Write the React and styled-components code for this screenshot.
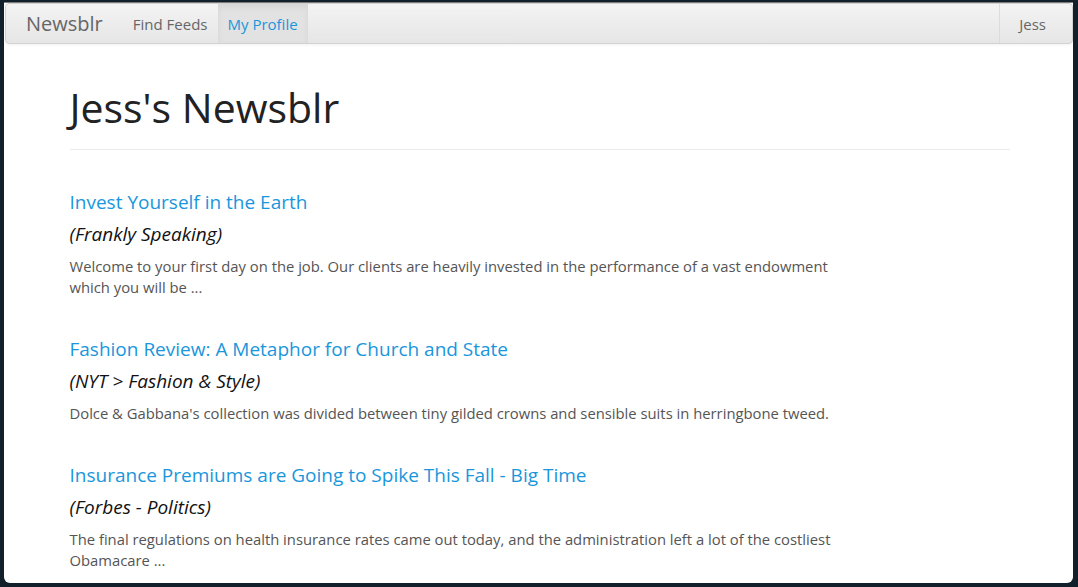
import React from 'react'
import styled, { createGlobalStyle } from 'styled-components'

const LinkColor = "#1a96dc";
const TextColor = "#555";

const GlobalStyle = createGlobalStyle`
  html, body {
    margin: 0;
    padding: 0;
    height: 100%;
    background: #12202b;
  }
  body {
    font-family: 'Open Sans', 'Liberation Sans', sans-serif;
  }
  #root {
    height: 100%;
  }
`

const Desktop = styled.div`
  height: 587px;
  padding: 2px 5px 4px 4px;
  box-sizing: border-box;
  overflow: hidden;
`
const Window = styled.div`
  height: 100%;
  background: #fff;
  border-top: 1px solid #7a7a7a;
  border-radius: 0 0 6px 6px;
  overflow: hidden;
  box-sizing: border-box;
`
const Navbar = styled.nav`
  display: flex;
  align-items: stretch;
  height: 41px;
  margin: 0 0 0 1px;
  background: linear-gradient(#f3f3f3, #e6e6e6);
  border: 1px solid #d2d2d2;
  border-radius: 4px;
  box-shadow: 0 1px 3px rgba(0, 0, 0, 0.06);
  box-sizing: border-box;
`
const Brand = styled.a`
  display: flex;
  align-items: center;
  padding: 0 20px 0 20px;
  font-size: 20px;
  color: #666;
  text-decoration: none;
`
const NavItem = styled.a`
  display: flex;
  align-items: center;
  padding: 0 10px;
  font-size: 15px;
  color: ${p => p.active ? LinkColor : "#666"};
  background: ${p => p.active ? "#e2e2e2" : "transparent"};
  box-shadow: ${p => p.active ? "inset 0 3px 6px rgba(0,0,0,0.06)" : "none"};
  text-decoration: none;
`
const Spacer = styled.div`
  flex: 1;
`
const UserItem = styled(NavItem)`
  padding: 0 26px 0 19px;
  border-left: 1px solid #dcdcdc;
`
const Container = styled.main`
  width: 940px;
  margin: 0 auto;
  padding-left: 2px;
`
const Header = styled.div`
  padding: 38px 0 17px;
  border-bottom: 1px solid #eaeaea;
`
const Title = styled.h1`
  margin: 0;
  font-size: 41px;
  font-weight: 400;
  line-height: 50px;
  color: #222;
`
const List = styled.div`
  padding-top: 39px;
`
const Article = styled.article`
  margin-bottom: 38px;
`
const ArticleTitle = styled.a`
  display: block;
  font-size: 19px;
  line-height: 26px;
  color: ${LinkColor};
  text-decoration: none;
`
const Source = styled.h4`
  margin: 6px 0 9px;
  font-size: 19px;
  font-style: italic;
  font-weight: 400;
  line-height: 26px;
  color: #111;
`
const Summary = styled.p`
  margin: 0;
  max-width: 780px;
  font-size: 14.8px;
  line-height: 21px;
  color: ${TextColor};
`

const articles = [
  {
    title: "Invest Yourself in the Earth",
    source: "Frankly Speaking",
    summary: "Welcome to your first day on the job. Our clients are heavily invested in the performance of a vast endowment which you will be ..."
  },
  {
    title: "Fashion Review: A Metaphor for Church and State",
    source: "NYT > Fashion & Style",
    summary: "Dolce & Gabbana's collection was divided between tiny gilded crowns and sensible suits in herringbone tweed."
  },
  {
    title: "Insurance Premiums are Going to Spike This Fall - Big Time",
    source: "Forbes - Politics",
    summary: "The final regulations on health insurance rates came out today, and the administration left a lot of the costliest Obamacare ..."
  }
]

const App = () => {
  return (
    <Desktop>
      <GlobalStyle />
      <Window>
        <Navbar>
          <Brand href="#">Newsblr</Brand>
          <NavItem href="#">Find Feeds</NavItem>
          <NavItem href="#" active>My Profile</NavItem>
          <Spacer />
          <UserItem href="#">Jess</UserItem>
        </Navbar>
        <Container>
          <Header>
            <Title>Jess's Newsblr</Title>
          </Header>
          <List>
            {articles.map((a) => (
              <Article key={a.title}>
                <ArticleTitle href="#">{a.title}</ArticleTitle>
                <Source>({a.source})</Source>
                <Summary>{a.summary}</Summary>
              </Article>
            ))}
          </List>
        </Container>
      </Window>
    </Desktop>
  )
}

export default App
